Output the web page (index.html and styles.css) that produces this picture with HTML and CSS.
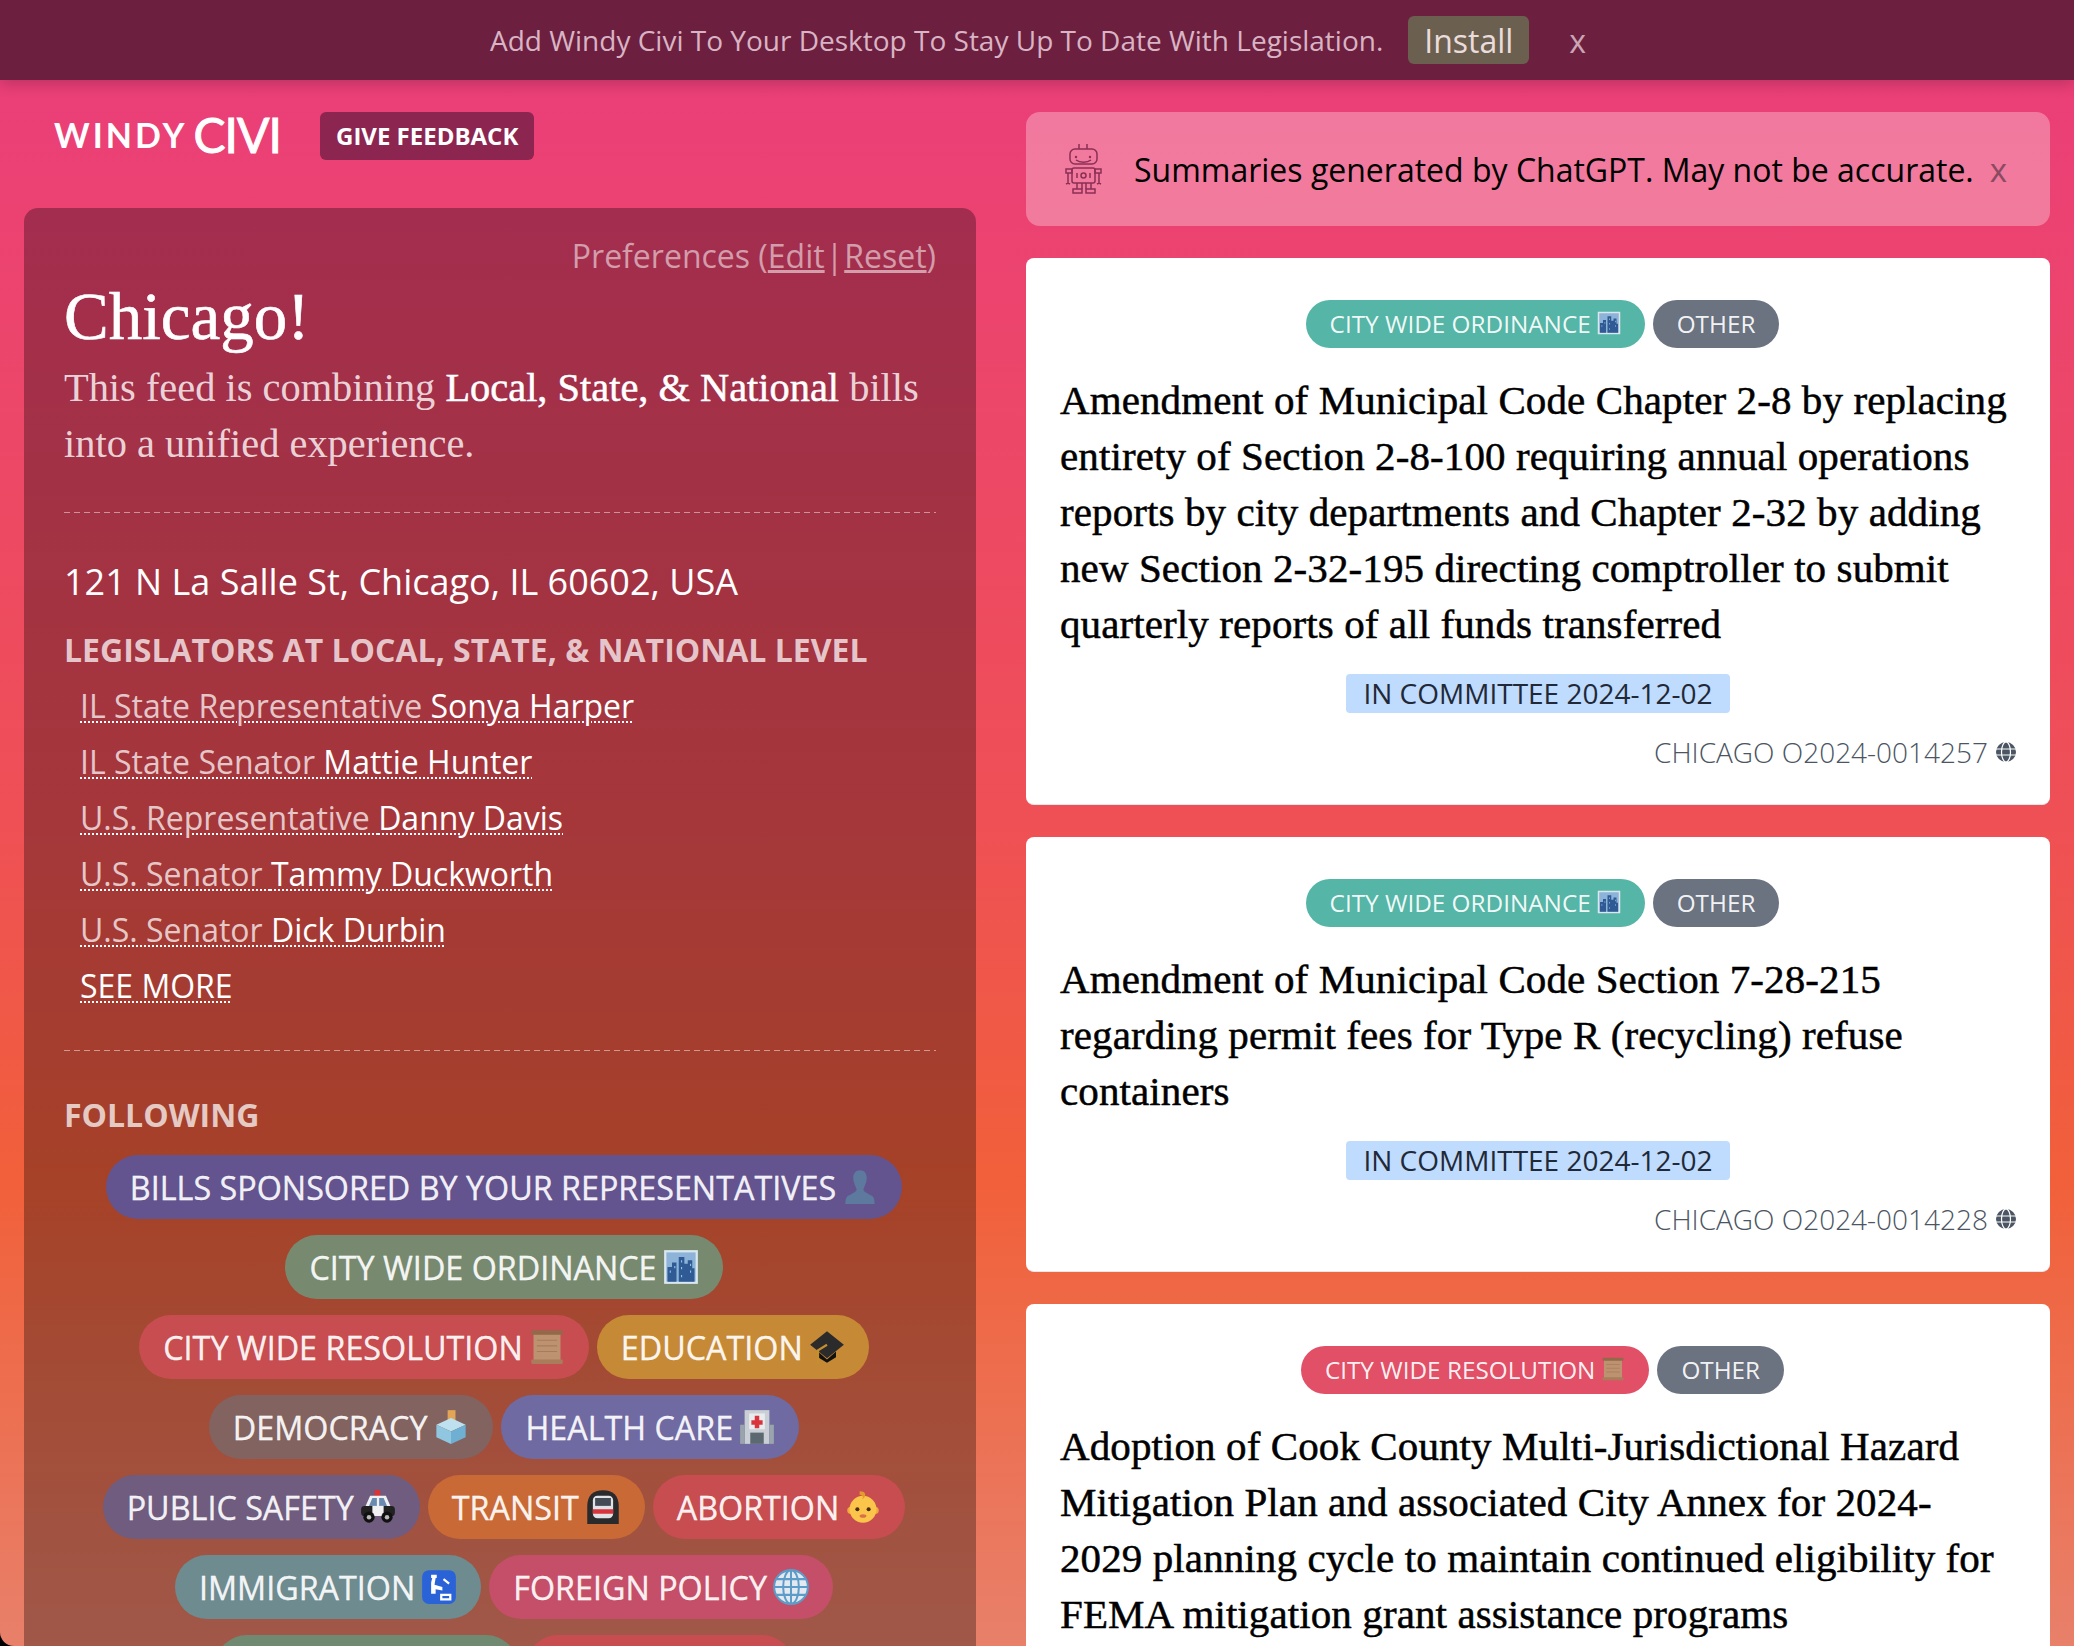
FILE: index.html
```html
<!DOCTYPE html>
<html lang="en">
<head>
    <meta charset="UTF-8">
    <meta name="viewport" content="width=device-width, initial-scale=1.0">
    <title>Windy Civi</title>
    <link rel="stylesheet" href="styles.css">
</head>
<body>
    <!-- Emoji are drawn here once and reused in the tag pills -->
    <svg class="icon-defs" xmlns="http://www.w3.org/2000/svg">
        <symbol id="i-bust" viewBox="0 0 32 32">
            <path fill="#5d7a9e" d="M16 1c4 0 6 3 6 7 0 4-2 7-3 10 0 2 2 3 6 5 3 1 4 3 4 8H3c0-5 1-7 4-8 4-2 6-3 6-5-1-3-3-6-3-10 0-4 2-7 6-7z"/>
        </symbol>
        <symbol id="i-city" viewBox="0 0 32 32">
            <rect x="1" y="1" width="30" height="30" fill="#dbe7ee"/>
            <rect x="3" y="3" width="26" height="26" fill="#8db4d8"/>
            <path fill="#2f5a94" d="M4 29V16h4v-4h4v17h2V7h5v6h3v-3h4v7h2v12z"/>
            <path fill="#8fc0e8" d="M6 19h1v2H6zm4-4h1v2h-1zm6-5h1v2h-1zm0 6h1v2h-1zm8-3h1v2h-1zm0 6h1v2h-1zm-8 4h1v2h-1z"/>
        </symbol>
        <symbol id="i-scroll" viewBox="0 0 32 32">
            <rect x="4" y="3" width="24" height="26" fill="#bd9270"/>
            <path fill="none" stroke="#a67c5c" stroke-width="1" d="M7 10h18M7 15h18M7 20h18"/>
            <rect x="2" y="1" width="28" height="4" rx="1" fill="#94694a"/>
            <rect x="2" y="27" width="28" height="4" rx="1" fill="#a97d5b"/>
        </symbol>
        <symbol id="i-cap" viewBox="0 0 32 32">
            <path fill="#2b2b2b" d="M16 2l15 12-15 12L1 14z"/>
            <path fill="#111" d="M8 20l8 7 8-7v5l-8 5-8-5z"/>
            <path fill="none" stroke="#c68f2e" stroke-width="2" d="M16 14l-8 5v12"/>
        </symbol>
        <symbol id="i-ballot" viewBox="0 0 32 32">
            <path fill="#e2a455" d="M13 1h7v12h-7z"/>
            <path fill="#bfe0ee" d="M16 8l13 6-13 6-13-6z"/>
            <path fill="#90c6e0" d="M3 14l13 6v11L3 25z"/>
            <path fill="#6fb0d2" d="M29 14l-13 6v11l13-6z"/>
        </symbol>
        <symbol id="i-hospital" viewBox="0 0 32 32">
            <rect x="5" y="1" width="22" height="30" fill="#c9cfd4"/>
            <rect x="1" y="14" width="4" height="17" fill="#9aa4ac"/>
            <rect x="27" y="14" width="4" height="17" fill="#9aa4ac"/>
            <path fill="#e8ecee" d="M9 4h14v14H9z"/>
            <path fill="#d8343c" d="M14 6h4v4h3v4h-3v3h-4v-3h-3v-4h3z"/>
            <rect x="10" y="21" width="12" height="10" fill="#5d6970"/>
        </symbol>
        <symbol id="i-police" viewBox="0 0 32 32">
            <rect x="13" y="1" width="5" height="5" fill="#d33"/>
            <path fill="#f1f1f4" d="M9 6h14l4 9H5z"/>
            <path fill="#6a8bb0" d="M11 8h4v7H8zm6 0h4l3 7h-7z"/>
            <rect x="1" y="15" width="30" height="9" rx="3" fill="#222"/>
            <rect x="11" y="15" width="10" height="9" fill="#f1f1f4"/>
            <circle cx="8" cy="25" r="5" fill="#111"/>
            <circle cx="24" cy="25" r="5" fill="#111"/>
            <circle cx="8" cy="25" r="2" fill="#bbb"/>
            <circle cx="24" cy="25" r="2" fill="#bbb"/>
        </symbol>
        <symbol id="i-metro" viewBox="0 0 32 32">
            <path fill="#2a2a2c" d="M16 1c9 0 14 5 14 14v16H2V15C2 6 7 1 16 1z"/>
            <rect x="7" y="6" width="18" height="20" rx="4" fill="#dfe2e6"/>
            <rect x="9" y="8" width="14" height="7" fill="#444b55"/>
            <rect x="7" y="18" width="18" height="4" fill="#d8343c"/>
        </symbol>
        <symbol id="i-baby" viewBox="0 0 32 32">
            <circle cx="5" cy="19" r="3" fill="#f0a93a"/>
            <circle cx="27" cy="19" r="3" fill="#f0a93a"/>
            <circle cx="16" cy="18" r="12" fill="#fbc44a"/>
            <path fill="#e39c2c" d="M13 2c3 0 5 1 5 3s-2 4-3 4c2-2 0-4-2-4z"/>
            <circle cx="11" cy="18" r="1.800" fill="#4a2c10"/>
            <circle cx="21" cy="18" r="1.800" fill="#4a2c10"/>
            <ellipse cx="16" cy="24" rx="3" ry="1.600" fill="#d9704a"/>
        </symbol>
        <symbol id="i-passport" viewBox="0 0 32 32">
            <rect x="1" y="1" width="30" height="30" rx="6" fill="#2a63d8"/>
            <path fill="#fff" d="M9 5h5v3h-1l-1 6 7 2v3l-6-1v4H9V12l1-4H9z"/>
            <path fill="none" stroke="#fff" stroke-width="2" d="M20 9l5 4M18 23h8v4h-8z"/>
        </symbol>
        <symbol id="i-globe" viewBox="0 0 32 32">
            <circle cx="16" cy="16" r="15" fill="#e4e8f0"/>
            <g fill="none" stroke="#5c9cc8" stroke-width="1.800">
                <circle cx="16" cy="16" r="15"/>
                <ellipse cx="16" cy="16" rx="7" ry="15"/>
                <path d="M16 1v30M1 16h30M3 9h26M3 23h26"/>
            </g>
        </symbol>
        <symbol id="i-web" viewBox="0 0 20 20">
            <circle cx="10" cy="10" r="10" fill="#4b5563"/>
            <g fill="none" stroke="#fff" stroke-width="1.200">
                <ellipse cx="10" cy="10" rx="4.500" ry="10"/>
                <path d="M0 7h20M0 13h20"/>
            </g>
        </symbol>
    </svg>

    <div class="window">
        <div class="install-bar">
            <span>Add Windy Civi To Your Desktop To Stay Up To Date With Legislation.</span>
            <button class="install-btn">Install</button>
            <span class="install-close">x</span>
        </div>

        <div class="main">
            <div class="left">
                <div class="brand-row">
                    <div class="logo"><span class="logo-windy">WINDY</span><span class="logo-civi">CIVI</span></div>
                    <a class="feedback" href="#">GIVE FEEDBACK</a>
                </div>

                <div class="panel">
                    <div class="prefs">Preferences (<a href="#">Edit</a><span class="prefs-sep">|</span><a href="#">Reset</a>)</div>
                    <h1>Chicago!</h1>
                    <p class="intro">This feed is combining <b>Local, State, &amp; National</b> bills<br>into a unified experience.</p>
                    <hr>
                    <div class="address">121 N La Salle St, Chicago, IL 60602, USA</div>
                    <h2 class="legislators">LEGISLATORS AT LOCAL, STATE, &amp; NATIONAL LEVEL</h2>
                    <ul class="reps">
                        <li><a href="#">IL State Representative <b>Sonya Harper</b></a></li>
                        <li><a href="#">IL State Senator <b>Mattie Hunter</b></a></li>
                        <li><a href="#">U.S. Representative <b>Danny Davis</b></a></li>
                        <li><a href="#">U.S. Senator <b>Tammy Duckworth</b></a></li>
                        <li><a href="#">U.S. Senator <b>Dick Durbin</b></a></li>
                        <li><a href="#"><b>SEE MORE</b></a></li>
                    </ul>
                    <hr class="hr-tight">
                    <h2 class="following">FOLLOWING</h2>
                    <div class="follow-tags">
                        <span class="tag c-purple">BILLS SPONSORED BY YOUR REPRESENTATIVES <svg><use href="#i-bust"/></svg></span>
                        <span class="tag c-green">CITY WIDE ORDINANCE <svg><use href="#i-city"/></svg></span>
                        <span class="tag c-red">CITY WIDE RESOLUTION <svg><use href="#i-scroll"/></svg></span>
                        <span class="tag c-amber">EDUCATION <svg><use href="#i-cap"/></svg></span>
                        <span class="tag c-brown">DEMOCRACY <svg><use href="#i-ballot"/></svg></span>
                        <span class="tag c-indigo">HEALTH CARE <svg><use href="#i-hospital"/></svg></span>
                        <span class="tag c-violet">PUBLIC SAFETY <svg><use href="#i-police"/></svg></span>
                        <span class="tag c-orange">TRANSIT <svg><use href="#i-metro"/></svg></span>
                        <span class="tag c-red">ABORTION <svg><use href="#i-baby"/></svg></span>
                        <span class="tag c-teal">IMMIGRATION <svg><use href="#i-passport"/></svg></span>
                        <span class="tag c-rose">FOREIGN POLICY <svg><use href="#i-globe"/></svg></span>
                        <!-- only the tops of these two show above the fold -->
                        <span class="tag c-sage tag-cut-a"></span>
                        <span class="tag c-red tag-cut-b"></span>
                    </div>
                </div>
            </div>

            <div class="right">
                <div class="notice">
                    <svg class="robot" viewBox="0 0 37 51">
                        <g fill="none" stroke="#8c2f55" stroke-width="1.500">
                            <path d="M14 6V1M22 6V1"/>
                            <rect x="5" y="6" width="27" height="15" rx="5"/>
                            <path d="M11 17c4 3 11 3 15 0"/>
                            <rect x="7" y="25" width="23" height="15" rx="2"/>
                            <path d="M12 30v5M25 30v5"/>
                            <circle cx="18.500" cy="32.500" r="2.500"/>
                            <rect x="1" y="26" width="6" height="4"/>
                            <rect x="30" y="26" width="6" height="4"/>
                            <path d="M3 30v10M34 30v10M1 41l2-1 2 1M32 41l2-1 2 1"/>
                            <path d="M12 40v6M17 40v6M21 40v6M26 40v6"/>
                            <rect x="8" y="46" width="9" height="4"/>
                            <rect x="21" y="46" width="9" height="4"/>
                        </g>
                        <circle cx="11" cy="14" r="1.200" fill="#8c2f55"/>
                        <circle cx="25" cy="14" r="1.200" fill="#8c2f55"/>
                    </svg>
                    <span class="notice-text">Summaries generated by ChatGPT. May not be accurate.</span>
                    <span class="notice-close">x</span>
                </div>

                <div class="card">
                    <div class="card-tags">
                        <span class="pill p-teal">CITY WIDE ORDINANCE <svg><use href="#i-city"/></svg></span>
                        <span class="pill p-gray">OTHER</span>
                    </div>
                    <h3>Amendment of Municipal Code Chapter 2-8 by replacing<br>entirety of Section 2-8-100 requiring annual operations<br>reports by city departments and Chapter 2-32 by adding<br>new Section 2-32-195 directing comptroller to submit<br>quarterly reports of all funds transferred</h3>
                    <div class="status-row"><span class="status">IN COMMITTEE 2024-12-02</span></div>
                    <div class="source">CHICAGO O2024-0014257 <svg><use href="#i-web"/></svg></div>
                </div>

                <div class="card">
                    <div class="card-tags">
                        <span class="pill p-teal">CITY WIDE ORDINANCE <svg><use href="#i-city"/></svg></span>
                        <span class="pill p-gray">OTHER</span>
                    </div>
                    <h3>Amendment of Municipal Code Section 7-28-215<br>regarding permit fees for Type R (recycling) refuse<br>containers</h3>
                    <div class="status-row"><span class="status">IN COMMITTEE 2024-12-02</span></div>
                    <div class="source">CHICAGO O2024-0014228 <svg><use href="#i-web"/></svg></div>
                </div>

                <div class="card">
                    <div class="card-tags">
                        <span class="pill p-red">CITY WIDE RESOLUTION <svg><use href="#i-scroll"/></svg></span>
                        <span class="pill p-gray">OTHER</span>
                    </div>
                    <h3>Adoption of Cook County Multi-Jurisdictional Hazard<br>Mitigation Plan and associated City Annex for 2024-<br>2029 planning cycle to maintain continued eligibility for<br>FEMA mitigation grant assistance programs</h3>
                </div>
            </div>
        </div>
    </div>
</body>
</html>
```

FILE: styles.css
```css
html, body {
    margin: 0;
    height: 100%;
    overflow: hidden;
    background: #000000;
}

body {
    font-family: "Open Sans", sans-serif;
}

.icon-defs {
    display: none;
}

.window {
    height: 1646px;
    overflow: hidden;
    border-radius: 0 0 0 14px;
    background: linear-gradient(180deg, #ea3d7c 0%, #ef5055 50%, #f1603a 72%, #e8806a 100%);
}

/* Install banner */
.install-bar {
    height: 80px;
    box-sizing: border-box;
    display: flex;
    justify-content: center;
    align-items: center;
    padding-left: 2px;
    background: #6d1f3f;
    color: #d8b4c4;
    font-size: 28px;
    box-shadow: 0 4px 14px #00000033;
}

.install-btn {
    margin-left: 25px;
    width: 121px;
    height: 48px;
    border: none;
    border-radius: 6px;
    background: #6b6050;
    color: #ebdcdc;
    font-family: inherit;
    font-size: 32px;
    padding: 0;
}

.install-close {
    margin-left: 40px;
    font-size: 32px;
    color: #c9a5b5;
}

.main {
    display: flex;
    gap: 50px;
    padding: 0 24px;
}

.left {
    width: 952px;
    flex-shrink: 0;
    padding-top: 32px;
}

.right {
    width: 1024px;
    flex-shrink: 0;
    padding-top: 32px;
}

/* Logo row */
.brand-row {
    display: flex;
    align-items: flex-start;
    height: 96px;
    padding-left: 30px;
}

.logo {
    width: 266px;
    height: 44px;
    display: flex;
    align-items: center;
    color: #ffffff;
    font-family: Lato, sans-serif;
    font-weight: 700;
}

.logo-windy {
    font-size: 34px;
    letter-spacing: 3px;
}

.logo-civi {
    font-size: 48px;
    font-weight: 400;
    margin-left: 6px;
    letter-spacing: -1px;
    -webkit-text-stroke: 1px #ffffff;
}

.feedback {
    height: 48px;
    line-height: 48px;
    padding: 0 16px;
    border-radius: 6px;
    background: #8c2550;
    color: #ffffff;
    font-size: 24px;
    font-weight: 700;
    text-decoration: none;
}

/* Left panel */
.panel {
    box-sizing: border-box;
    padding: 26px 40px 0;
    border-radius: 14px;
    background: #0000004f;
    height: 1500px;
    color: #ffffff;
}

.prefs {
    text-align: right;
    font-size: 32px;
    line-height: 44px;
    height: 44px;
    color: #ffffff88;
}

.prefs a {
    color: inherit;
}

.prefs-sep {
    margin: 0 1px;
}

h1 {
    margin: -4px 0 2px;
    font-family: "Liberation Serif", serif;
    font-size: 67px;
    font-weight: 400;
    line-height: 84px;
    -webkit-text-stroke: 0.6px #ffffff;
}

.intro {
    margin: 0;
    font-family: "Liberation Serif", serif;
    font-size: 40.400px;
    line-height: 56px;
    color: #ffffffcc;
}

.intro b {
    color: #ffffff;
    font-weight: 400;
    -webkit-text-stroke: 0.5px #ffffff;
}

hr {
    margin: 40px 0 0;
    border: none;
    height: 1px;
    background: repeating-linear-gradient(90deg, #ffffff77 0 6px, transparent 6px 10px);
}

.hr-tight {
    margin-top: 36px;
}

.address {
    margin-top: 45px;
    font-size: 36px;
    line-height: 48px;
}

h2 {
    margin: 0;
    font-size: 32px;
    font-weight: 700;
    line-height: 44px;
    color: #ffffffbb;
}

.legislators {
    margin-top: 22px;
}

.reps {
    list-style: none;
    margin: 6px 0 0;
    padding: 0 0 0 16px;
}

.reps li {
    height: 56px;
    line-height: 56px;
    font-size: 32px;
}

.reps a {
    color: #ffffffbb;
    text-decoration: underline dotted #ffffff;
    text-decoration-thickness: 2px;
    text-underline-offset: 3px;
}

.reps b {
    color: #ffffff;
    font-weight: 400;
}

.following {
    margin-top: 42px;
}

.follow-tags {
    margin-top: 18px;
    display: flex;
    flex-wrap: wrap;
    justify-content: center;
}

.tag {
    height: 64px;
    box-sizing: border-box;
    display: inline-flex;
    align-items: center;
    gap: 6px;
    margin: 0 0 16px 8px;
    padding: 0 24px;
    border-radius: 32px;
    font-size: 32.300px;
    color: #ffffffee;
    white-space: nowrap;
    -webkit-text-stroke: 0.3px #ffffff;
}

.tag svg {
    width: 36px;
    height: 36px;
}

.tag-cut-a {
    width: 303px;
}

.tag-cut-b {
    width: 268px;
}

.c-purple { background: #63548f; }
.c-green { background: #778a70; }
.c-red { background: #c74d50; }
.c-amber { background: #c68a36; }
.c-brown { background: #826360; }
.c-indigo { background: #706aa2; }
.c-violet { background: #6f5c7f; }
.c-orange { background: #c96a36; }
.c-teal { background: #6e8b90; }
.c-rose { background: #c54f68; }
.c-sage { background: #6f8a70; }

/* Right column */
.notice {
    height: 114px;
    box-sizing: border-box;
    display: flex;
    align-items: center;
    padding-left: 39px;
    border-radius: 14px;
    background: #ffffff4d;
}

.robot {
    width: 37px;
    height: 51px;
    margin-top: -2px;
}

.notice-text {
    margin-left: 32px;
    font-size: 32px;
    color: #000000;
}

.notice-close {
    margin-left: 16px;
    font-size: 33px;
    color: #8a4a62;
}

.card {
    box-sizing: border-box;
    margin-top: 32px;
    padding: 42px 34px 32px;
    border-radius: 8px;
    border-bottom: 1px solid #e5e7eb;
    background: #ffffff;
}

.card-tags {
    display: flex;
    justify-content: center;
    gap: 8px;
    padding-left: 9px;
}

.pill {
    height: 48px;
    box-sizing: border-box;
    display: inline-flex;
    align-items: center;
    gap: 6px;
    padding: 0 24px 2px;
    border-radius: 24px;
    font-size: 24.300px;
    color: #ffffffee;
    white-space: nowrap;
}

.pill svg {
    width: 24px;
    height: 24px;
}

.p-teal { background: #55b5a6; }
.p-gray { background: #6b7280; }
.p-red { background: #e25067; }

h3 {
    margin: 24px 0 0;
    font-family: "Liberation Serif", serif;
    font-size: 41px;
    letter-spacing: 0.1px;
    font-weight: 400;
    line-height: 56px;
    color: #000000;
    white-space: nowrap;
    -webkit-text-stroke: 0.5px #000000;
}

.status-row {
    margin-top: 22px;
    text-align: center;
    height: 39px;
}

.status {
    display: inline-block;
    height: 39px;
    line-height: 38px;
    padding: 0 17px;
    border-radius: 4px;
    background: #bfdbfe;
    color: #1f2937;
    font-size: 28px;
}

.source {
    margin-top: 19px;
    padding-bottom: 1px;
    display: flex;
    justify-content: flex-end;
    align-items: center;
    gap: 8px;
    height: 39px;
    font-size: 28px;
    font-weight: 300;
    color: #4b5563;
}

.source svg {
    width: 20px;
    height: 20px;
}
```
